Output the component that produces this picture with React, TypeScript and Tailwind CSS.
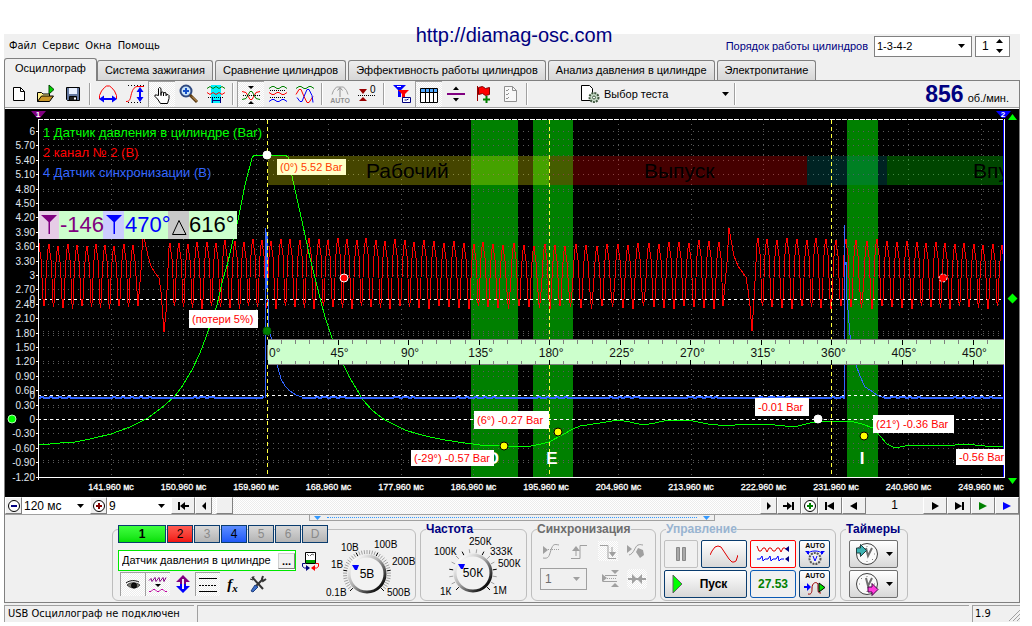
import type { ReactNode } from 'react';
import clsx from 'clsx';

const tabs = [
  'Осциллограф',
  'Система зажигания',
  'Сравнение цилиндров',
  'Эффективность работы цилиндров',
  'Анализ давления в цилиндре',
  'Электропитание',
];

const channels = [
  { id: '1', style: 'w-12 bg-linear-to-b from-[#3dff3d] to-[#00e000] font-bold text-black border-[#0a3c6e]' },
  { id: '2', style: 'w-[26px] bg-linear-to-b from-[#ff5a50] to-[#f01010] text-black border-[#0a3c6e]' },
  { id: '3', style: 'w-[26px] bg-linear-to-b from-[#d8d8d8] to-[#b4b4b4] text-[#8a8a8a] border-[#0a3c6e]' },
  { id: '4', style: 'w-[26px] bg-linear-to-b from-[#5c8cff] to-[#2058f8] text-black border-[#0a3c6e]' },
  { id: '5', style: 'w-[26px] bg-linear-to-b from-[#d8d8d8] to-[#b4b4b4] text-[#8a8a8a] border-[#0a3c6e]' },
  { id: '6', style: 'w-[26px] bg-linear-to-b from-[#d8d8d8] to-[#b4b4b4] text-[#8a8a8a] border-[#0a3c6e]' },
  { id: 'D', style: 'w-[26px] bg-linear-to-b from-[#d8d8d8] to-[#b4b4b4] text-[#8a8a8a] border-[#0a3c6e]' },
];

const hatch = 'bg-[repeating-conic-gradient(#ececec_0_25%,#ffffff_0_50%)] bg-[length:2px_2px]';

// ---------- small pieces ----------

function Icon({ children, size = 20 }: { children: ReactNode; size?: number }) {
  return (
    <svg width={size} height={20} viewBox={`0 0 ${size} 20`} fill="none" stroke="#000" className="block shrink-0" aria-hidden="true">
      {children}
    </svg>
  );
}

function ToolButton({ label, pressed, children }: { label: string; pressed?: boolean; children: ReactNode }) {
  return (
    <button
      type="button"
      aria-label={label}
      aria-pressed={pressed}
      className={clsx(
        'flex h-[26px] w-[27px] shrink-0 items-center justify-center',
        pressed && ['border-l border-t border-[#a0a0a0]', hatch],
      )}
    >
      {children}
    </button>
  );
}

function Separator() {
  return (
    <div className="flex w-2 shrink-0 justify-center py-0.5">
      <div className="w-0.5 border-l border-r border-l-[#a0a0a0] border-r-white" />
    </div>
  );
}

function ScrollButton({ label, wide, children }: { label: string; wide?: boolean; children?: ReactNode }) {
  return (
    <button
      type="button"
      aria-label={label}
      className={clsx(
        'flex h-[17px] shrink-0 items-center justify-center border border-r-[#808080] border-b-[#808080] border-l-white border-t-white bg-[#f0f0f0]',
        wide ? 'w-6' : 'w-[17px]',
      )}
    >
      <svg width="12" height="12" viewBox="0 0 12 12" aria-hidden="true">
        {children}
      </svg>
    </button>
  );
}

function Caret({ color = '#000' }: { color?: string }) {
  return (
    <svg width="7" height="4" viewBox="0 0 7 4" className="pointer-events-none shrink-0" aria-hidden="true">
      <path d="M0 0h7L3.5 4z" fill={color} />
    </svg>
  );
}

function ZoomSign({ color, plus }: { color: string; plus?: boolean }) {
  return (
    <>
      <circle cx="6" cy="6" r="5.5" fill="#fff" stroke="#000" />
      <path d={plus ? 'M3 6h6M6 3v6' : 'M3 6h6'} stroke={color} strokeWidth="2" />
    </>
  );
}

function Group({ title, tone, className, children }: { title: string; tone: string; className: string; children: ReactNode }) {
  return (
    <fieldset className={clsx('h-[78px] rounded-md border border-[#bdbdbd] px-[3px]', className)}>
      <legend className={clsx('ml-0.5 h-3 text-[12px] leading-3 font-bold', tone)}>{title}</legend>
      {children}
    </fieldset>
  );
}

// ---------- chart ----------

const LEFT = 38;
const RIGHT = 1004;
const TOP = 119;
const BOTTOM = 477;

const yTicks = Array.from({ length: 25 }, (_, i) => {
  const v = 6 - i * 0.3;
  const r = Math.round(v * 10) / 10;
  return { y: 131 + i * 14.4, label: Number.isInteger(r) ? String(r + 0) : r.toFixed(2) };
});
const xTicks = Array.from({ length: 13 }, (_, i) => ({
  x: 111 + i * 72.5,
  label: `${(141.96 + i * 9).toFixed(3)} мс`,
}));

const gridRows = [
  ...yTicks.map((t) => t.y),
  155, 191, 227, 263, 335, 371, 407, 443,
  139, 234, 266, 331, 363, 428, 460,
];

const redBefore = [39, 49, 58, 68, 77, 87, 96, 105, 114, 124, 133];
const redMiddle = [
  170, 179, 188, 197, 207, 216, 225, 235, 244, 253, 262, 271, 281, 290, 300, 309, 319, 328, 338, 347, 357, 366, 376, 385, 395,
  405, 414, 424, 434, 444, 454, 464, 474, 483, 493, 503, 514, 524, 534, 545, 555, 565, 576, 586, 597, 607, 618, 628, 638, 649,
  659, 669, 679, 689, 699, 709, 719,
];
const redAfter = [
  758, 767, 777, 787, 797, 807, 816, 826, 836, 846, 856, 867, 877, 887, 897, 907, 917, 926, 936, 945, 955, 964, 974, 983, 993, 1002,
];

function toothWave(peaks: number[]) {
  const parts: string[] = [];
  peaks.forEach((p, i) => {
    const top = 241 - Math.round(3 * Math.cos((p - 330) / 75)) + (i % 3);
    parts.push(`${p - 2},${top + 16} ${p - 1},${top + 5} ${p},${top} ${p + 1},${top + 9} ${p + 2},${top + 16}`);
    const next = peaks[i + 1];
    if (next) {
      const mid = (p + next) / 2;
      parts.push(`${p + 3},278 ${mid - 1},299 ${mid},${306 + (i % 4)} ${mid + 1},299 ${next - 3},278`);
    }
  });
  return parts.join(' ');
}

const redLine = [
  toothWave(redBefore),
  '138,306 141,270 143,230 145,242 148,256 151,266 155,273 159,278 161,292 162,305 164,332 166,312 168,268',
  toothWave(redMiddle),
  '723,306 727,262 729,228 731,240 734,256 738,266 743,273 746,277 748,290 750,306 752,331 754,300 756,262',
  toothWave(redAfter),
].join(' ');

function flatNoise(from: number, to: number) {
  const pts: string[] = [];
  for (let x = from; x <= to; x += 3) {
    pts.push(`${x},${398 + (Math.sin(x * 1.7) * Math.cos(x * 0.31) > 0.4 ? -1 : 0)}`);
  }
  return pts.join(' ');
}

const blueFlat = [flatNoise(39, 266), flatNoise(302, 845), flatNoise(883, 1004)];
const blueSpikes = [
  '265,398 265,228 266,290 267,232 268,300 269,331 272,340 275,357 278,368 281,379 285,386 290,391 296,395 302,397 305,398',
  '844,398 844,225 845,265 846,262 846,290 848,310 850,335 855,362 860,376 865,387 870,390 877,395 884,398',
];

const greenLine =
  '39,444 50,444 60,443 75,442 90,439 111,434 130,427 148,418 165,405 175,396 183,385 192,370 200,353 206,337 211,323 217,305 ' +
  '222,283 228,262 233,240 238,220 245,185 252,158 254,155 285,155 288,157 292,176 300,212 310,258 320,298 325,317 333,341 ' +
  '343,364 350,378 363,400 373,411 385,420 395,425 405,430 418,434 430,437 445,440 465,443 480,445 500,446 531,446 541,444 ' +
  '549,442 562,435 573,429 580,426 600,423 618,420 630,422 643,425 655,423 668,420 685,420 693,421 708,424 727,426 743,424 ' +
  '765,424 785,426 798,426 810,423 820,422 832,421 850,421 862,424 873,428 880,436 887,444 895,448 905,446 920,445 945,446 ' +
  '965,444 985,446 1003,446';

const bands = [
  { x: 471, w: 47, letter: 'D', lx: 493 },
  { x: 533, w: 40, letter: 'E', lx: 552 },
  { x: 847, w: 31, letter: 'I', lx: 862 },
];

const strokes = [
  { x: 268, w: 281, color: '#ffff00', name: 'Рабочий', tx: 366 },
  { x: 549, w: 258, color: '#ff0000', name: 'Выпуск', tx: 644 },
  { x: 807, w: 80, color: '#008080', name: '', tx: 0 },
  { x: 887, w: 117, color: '#00ff00', name: 'Впуск', tx: 973 },
];

const callouts = [
  { x: 277, y: 159, w: 69, h: 16, text: '(0°) 5.52 Bar', fill: '#ffffc8', color: '#ff3c00' },
  { x: 189, y: 310, w: 69, h: 18, text: '(потери 5%)', fill: '#fff', color: '#ff0000' },
  { x: 474, y: 411, w: 75, h: 18, text: '(6°) -0.27 Bar', fill: '#fff', color: '#ff0000' },
  { x: 411, y: 450, w: 83, h: 16, text: '(-29°) -0.57 Bar', fill: '#fff', color: '#ff0000' },
  { x: 755, y: 398, w: 54, h: 18, text: '-0.01 Bar', fill: '#fff', color: '#ff0000' },
  { x: 873, y: 415, w: 81, h: 18, text: '(21°) -0.36 Bar', fill: '#fff', color: '#ff0000' },
  { x: 956, y: 449, w: 50, h: 16, text: '-0.56 Bar', fill: '#fff', color: '#ff0000' },
];

const dots = [
  { x: 267, y: 155, fill: '#fff', stroke: '#fff' },
  { x: 267, y: 331, fill: '#008000', stroke: '#006000' },
  { x: 344, y: 278, fill: '#ff0000', stroke: '#fff' },
  { x: 943, y: 278, fill: '#ff0000', stroke: '#fff', dash: '2 2' },
  { x: 504, y: 446, fill: '#ffff00', stroke: '#000' },
  { x: 558, y: 432, fill: '#ffff00', stroke: '#000' },
  { x: 864, y: 436, fill: '#ffff00', stroke: '#000' },
  { x: 818, y: 419, fill: '#fff', stroke: '#fff' },
  { x: 12, y: 419, fill: '#00ff00', stroke: '#b0ffb0' },
];

function AngleRuler() {
  const step = 70.55 / 5;
  return (
    <g>
      <rect x="267" y="340" width="737" height="25" fill="#ccffcc" />
      <path d="M267 339.5H1004M267 364.5H1004M267.5 339v26" stroke="#808080" />
      {Array.from({ length: 52 }, (_, i) => {
        const x = Math.round(267 + i * step) + 0.5;
        const major = i % 5 === 0;
        return <path key={i} d={major ? `M${x} 340v5M${x} 360v5` : `M${x} 340v4M${x} 361v3`} stroke={major ? '#000' : '#808080'} />;
      })}
      {Array.from({ length: 11 }, (_, i) => (
        <text key={i} x={i === 0 ? 269 : 269 + i * 70.55} y="357" fontSize="12" fill="#111" textAnchor={i === 0 ? 'start' : 'middle'}>
          {i * 45}°
        </text>
      ))}
    </g>
  );
}

function AngleReadout() {
  return (
    <g fontSize="22">
      <rect x="39" y="211" width="198" height="28" fill="#ccffcc" />
      <rect x="39" y="211" width="20" height="28" fill="#e6cce6" />
      <rect x="103" y="211" width="21" height="28" fill="#ccccff" />
      <rect x="168" y="211" width="21" height="28" fill="#c8c8c8" />
      <path d="M41 215h16l-7 7v12h-1.500v-12z" fill="#800080" />
      <path d="M106 215h16l-7 7v12h-1.500v-12z" fill="#0000ff" />
      <path d="M172.500 234.500h13.500l-7-14z" fill="none" stroke="#000" />
      <text x="60" y="232" fill="#800080">-146</text>
      <text x="125" y="232" fill="#0000ff">470°</text>
      <text x="189" y="232" fill="#000">616°</text>
    </g>
  );
}

function Chart() {
  return (
    <svg viewBox="5 109 1014 388" className="block h-auto w-full bg-black font-['Liberation_Sans']" role="img" aria-label="Осциллограмма">
      <defs>
        <clipPath id="plot">
          <rect x={LEFT} y={TOP} width={RIGHT - LEFT} height={BOTTOM - TOP} />
        </clipPath>
      </defs>

      {bands.map((b) => (
        <rect key={b.letter} x={b.x} y={TOP + 1} width={b.w} height={BOTTOM - TOP - 1} fill="#008000" />
      ))}

      <g stroke="#5a5a5a" strokeDasharray="1 4">
        {gridRows.map((y, i) => (
          <path key={i} d={`M${LEFT} ${Math.round(y) + 0.5}H${RIGHT}`} />
        ))}
        {xTicks.map((t) => (
          <path key={t.x} d={`M${Math.floor(t.x) + 0.5} 124V${BOTTOM}`} />
        ))}
      </g>

      <g stroke="#fff" strokeDasharray="3 3">
        <path d="M38 299.500H1004M38 395.500H1004M38 419.500H1004" />
      </g>

      <g clipPath="url(#plot)" fill="none">
        <g shapeRendering="crispEdges">
          <polyline points={redLine} stroke="#ff0000" />
          <polyline points={greenLine} stroke="#00ff00" />
          {blueFlat.map((points) => (
            <polyline key={points} points={points} stroke="#3366ff" strokeWidth="2" />
          ))}
          {blueSpikes.map((points) => (
            <polyline key={points} points={points} stroke="#3366ff" />
          ))}
        </g>
        <g fontSize="21" fill="#000">
          {strokes.map((s) => (
            <g key={s.x}>
              <rect x={s.x} y="156" width={s.w} height="29" fill={s.color} fillOpacity="0.27" />
              <text x={s.tx} y="178">{s.name}</text>
            </g>
          ))}
        </g>
      </g>

      <path d="M267.500 120V477M549.500 120V477M831.500 120V477" stroke="#ffff40" strokeDasharray="4 3" />

      {/* axes */}
      <path d="M38.500 120V480M38 477.500H1004M1004.500 119V478" stroke="#fff" />
      <path d="M38 119.500H1004" stroke="#fff" strokeDasharray="5 1" />
      <path d="M1003.500 120V477" stroke="#0000ff" />
      {yTicks.map((t) => (
        <path key={t.y} d={`M36 ${Math.round(t.y) + 0.5}h3`} stroke="#fff" />
      ))}
      <g fontSize="10" fill="#e0e8f0" textAnchor="end">
        {yTicks.map((t) => (
          <text key={t.y} x="35" y={Math.round(t.y) + 4}>{t.label}</text>
        ))}
        <text x="35" y="303">0</text>
        <text x="35" y="399">0</text>
      </g>
      <g fontSize="9" fill="#fff" stroke="#fff" strokeWidth="0.3" textAnchor="middle">
        {xTicks.map((t) => (
          <text key={t.x} x={t.x} y="490">{t.label}</text>
        ))}
      </g>

      <g fontSize="13">
        <text x="43" y="137" fill="#00ff00">1 Датчик давления в цилиндре (Bar)</text>
        <text x="43" y="157" fill="#ff0000">2 канал № 2 (В)</text>
        <text x="43" y="177" fill="#3366ff">4 Датчик синхронизации (В)</text>
      </g>

      <AngleReadout />
      <AngleRuler />

      <g fontSize="17" fontWeight="bold" fill="#fff" textAnchor="middle">
        {bands.map((b) => (
          <text key={b.letter} x={b.lx} y="464">{b.letter}</text>
        ))}
      </g>
      <g fontSize="11" clipPath="url(#plot)">
        {callouts.map((c) => (
          <g key={c.text}>
            <rect x={c.x} y={c.y} width={c.w} height={c.h} fill={c.fill} />
            <text x={c.x + 3} y={c.y + c.h / 2 + 4} fill={c.color}>{c.text}</text>
          </g>
        ))}
      </g>
      {dots.map((d) => (
        <circle key={`${d.x}-${d.y}`} cx={d.x} cy={d.y} r="4" fill={d.fill} stroke={d.stroke} strokeDasharray={d.dash} />
      ))}

      {/* cursor and trigger markers */}
      <path d="M31 111h15l-6 7h-3z" fill="#800080" />
      <path d="M996 111h15l-6 7h-3z" fill="#0000ff" />
      <g fontSize="8" fontWeight="bold" fill="#fff" textAnchor="middle">
        <text x="38" y="117">1</text>
        <text x="1003" y="117">2</text>
      </g>
      <path d="M1008 120h9l-4.500-6zM1007.500 298.500l5-5 5 5-5 5zM1008 478h9l-4.500 6z" fill="#00ff00" />
    </svg>
  );
}

// ---------- dials ----------

type DialLabel = { text: string; x: number; y: number };

function Dial({ value, labels, ticks }: { value: string; labels: DialLabel[]; ticks: number }) {
  const marks = Array.from({ length: ticks }, (_, i) => {
    const a = ((135 + (270 / (ticks - 1)) * i) * Math.PI) / 180;
    return { a, major: i % ((ticks - 1) / 5) < 1 };
  });
  const cx = 49;
  const cy = 38;
  return (
    <svg width="99" height="64" viewBox="0 0 99 64" className="block font-['Liberation_Sans']" role="img" aria-label={value}>
      <defs>
        <linearGradient id={`rim-${ticks}`} x1="0" y1="0" x2="1" y2="1">
          <stop offset="0.1" stopColor="#fff" />
          <stop offset="0.45" stopColor="#b0b0b0" />
          <stop offset="0.9" stopColor="#000" />
        </linearGradient>
      </defs>
      {marks.map(({ a, major }) => (
        <path
          key={a}
          d={`M${cx + 20 * Math.cos(a)} ${cy + 20 * Math.sin(a)}L${cx + 24 * Math.cos(a)} ${cy + 24 * Math.sin(a)}`}
          stroke={major ? '#000' : '#a0a0a0'}
        />
      ))}
      <circle cx={cx} cy={cy} r="18" fill="#f2f2f2" stroke={`url(#rim-${ticks})`} strokeWidth="3" />
      <path d={`M${cx - 15} ${cy - 9}h7l-2 5h-2z`} fill="#0000ff" />
      <text x={cx} y={cy + 4} fontSize="12" textAnchor="middle">{value}</text>
      <g fontSize="10">
        {labels.map((l) => (
          <text key={l.text} x={l.x} y={l.y}>{l.text}</text>
        ))}
      </g>
    </svg>
  );
}

const voltLabels = [
  { text: '0.1В', x: 8, y: 60 },
  { text: '1В', x: 13, y: 32 },
  { text: '10В', x: 23, y: 15 },
  { text: '100В', x: 56, y: 12 },
  { text: '200В', x: 74, y: 29 },
  { text: '500В', x: 69, y: 60 },
];
const freqLabels = [
  { text: '1К', x: 16, y: 60 },
  { text: '100К', x: 10, y: 20 },
  { text: '250К', x: 45, y: 10 },
  { text: '333К', x: 66, y: 20 },
  { text: '500К', x: 74, y: 32 },
  { text: '1М', x: 69, y: 59 },
];

// ---------- sections ----------

function MenuBar() {
  return (
    <div className="flex h-6 items-center justify-between pl-[5px] pr-2.5">
      <nav className="flex gap-1.5 font-['DejaVu_Sans_Condensed','DejaVu_Sans',sans-serif] text-[11px]">
        <a href="#file">Файл</a>
        <a href="#service">Сервис</a>
        <a href="#windows">Окна</a>
        <a href="#help">Помощь</a>
      </nav>
      <div className="flex items-center">
        <label htmlFor="order" className="mr-1.5 text-[11px] text-[#000080]">Порядок работы цилиндров</label>
        <div className="mr-[3px] flex h-[21px] w-[98px] items-center border border-[#808080] bg-white pr-1.5">
          <select id="order" className="h-full min-w-0 flex-1 appearance-none pl-0.5 text-[11px] outline-none">
            <option>1-3-4-2</option>
          </select>
          <Caret />
        </div>
        <div className="flex h-[21px] w-[35px] items-center border border-[#808080] bg-white pr-1.5">
          <input aria-label="Номер цилиндра" defaultValue="1" className="w-0 flex-1 pl-1.5 text-[12px] outline-none" />
          <svg width="7" height="14" viewBox="0 0 7 14" aria-hidden="true">
            <path d="M0 4h7L3.500 0zM0 10h7l-3.500 4z" />
          </svg>
        </div>
      </div>
    </div>
  );
}

function Tabs() {
  return (
    <div role="tablist" className="flex h-[22px] items-end gap-0.5 text-[11px]">
      {tabs.map((tab, i) => (
        <button
          key={tab}
          type="button"
          role="tab"
          aria-selected={i === 0}
          className={clsx(
            'rounded-t-[3px] border border-b-0 border-[#808080] whitespace-nowrap',
            i === 0
              ? 'relative -mr-0.5 -mb-px h-[23px] bg-[#f0f0f0] px-2.5 pb-1'
              : 'h-5 bg-linear-to-b from-[#eeeeee] to-[#d6d6d6] px-[7px]',
          )}
        >
          {tab}
        </button>
      ))}
    </div>
  );
}

function Toolbar() {
  return (
    <div className="flex h-[27px] border-b border-[#a0a0a0]">
      <ToolButton label="Новый">
        <Icon><path d="M4.500 3.500h7l4 4v9h-11z" fill="#fff" /><path d="M11.500 3.500v4h4" /></Icon>
      </ToolButton>
      <ToolButton label="Открыть">
        <Icon>
          <path d="M1.500 17.500v-9h4l1.500 1.500h6.500v2" fill="#ffef8c" />
          <path d="M1.500 17.500l4-5.500h12l-4 5.500z" fill="#c89628" />
          <path d="M13 1l5 4.500-5 4.500z" fill="#00d000" stroke="#004000" />
        </Icon>
      </ToolButton>
      <ToolButton label="Сохранить">
        <Icon>
          <path d="M3.500 3.500h13v13h-12l-1-1z" fill="#6478a0" />
          <path d="M6 4h8v6H6z" fill="#e8f0ff" stroke="none" />
          <path d="M6.500 12.500h7v4h-7z" fill="#222" /><path d="M12 13.500v2" stroke="#fff" strokeWidth="2" />
        </Icon>
      </ToolButton>
      <Separator />
      <ToolButton label="Длительность">
        <Icon>
          <path d="M1.500 15v-3.500l2-4.500 3-3.500 2-1.500h3l2 1.500 3 3.500 2 4.500V15" stroke="#f00" />
          <path d="M4 15h12" stroke="#00f" strokeWidth="2" /><path d="M1 15l5-3.500v7zM19 15l-5-3.500v7z" fill="#00f" stroke="none" />
        </Icon>
      </ToolButton>
      <ToolButton label="Амплитуда">
        <Icon>
          <path d="M3 1.500h16M3 18.500h13" strokeDasharray="1 2" />
          <path d="M1 17.500c3 0 4-1 5-6S9 3 12 2.500h7" stroke="#f00" />
          <path d="M15 6v9" stroke="#00f" strokeWidth="2" /><path d="M15 3l3.500 5h-7zM15 18l3.500-5h-7z" fill="#00f" stroke="none" />
        </Icon>
      </ToolButton>
      <ToolButton label="Перемещение" pressed>
        <Icon>
          <path
            d="M6.500 10.500v-7l1-1 1.500 1v6-2l1.500-.5 1 .5v2-1.500l1.500-.5 1 .5v2l2-.5 1 1v3l-1.500 5h-7l-3-4.500-2.500-2.500v-1.500h1.500z"
            fill="#fff"
          />
          <path d="M9 9v2M11.500 9v2M14 10v1" />
        </Icon>
      </ToolButton>
      <ToolButton label="Масштаб">
        <Icon>
          <circle cx="7" cy="7" r="5.500" fill="#c8e4fa" stroke="#304a80" strokeWidth="2" />
          <path d="M4 7h6M7 4v6" stroke="#1450c8" strokeWidth="2" />
          <path d="M11 11l7 7" stroke="#5a3c14" strokeWidth="3" /><path d="M13 12.500l5 5" stroke="#e0a860" />
        </Icon>
      </ToolButton>
      <ToolButton label="Измерение участка">
        <Icon>
          <path d="M5 1h10v18H5z" fill="#00f0ff" stroke="none" />
          <path d="M1 4.500l3-2 3 2 3-2 3 2 3-2 3 2" stroke="#008000" />
          <path d="M1 8.500l3 2 3-2 3 2 3-2 3 2 3-2" stroke="#f00" />
          <path d="M2 13.500h16" strokeDasharray="1 1" />
          <path d="M6.500 14v5M14.500 14v5M7 16.500h7" stroke="#000080" />
        </Icon>
      </ToolButton>
      <Separator />
      <ToolButton label="Наложение" pressed>
        <Icon>
          <path d="M1 6.500l4 1 4 7h2l4-7 4-1" stroke="#f00" /><path d="M1 14.500l4-1 4-7 2 0 4 7 4 1" stroke="#008000" />
          <path d="M2 10.500h17" strokeDasharray="1 1" /><path d="M7 1h6l-3 3zM7 19h6l-3-3z" fill="#000" stroke="none" />
        </Icon>
      </ToolButton>
      <ToolButton label="Раздельно">
        <Icon>
          <path d="M1 4.500l3-2h2l3 2h2l3-2h2l3 2" stroke="#008000" />
          <path d="M1 8.500l3 2h2l3-2h2l3 2h2l3-2" stroke="#f00" />
          <path d="M1 17.500l3-2h2l3 2h2l3-2h2l3 2" stroke="#00f" />
          <path d="M2 6.500h16M2 13.500h16" strokeDasharray="1 1" />
        </Icon>
      </ToolButton>
      <ToolButton label="Совмещение">
        <Icon>
          <path d="M1 4.500l3-2h2l3 2h2l3-2h2l3 2" stroke="#008000" />
          <path d="M1 10.500l3-5h2l3 7 3 6h2l4-6" stroke="#f00" />
          <path d="M2 13.500l3 4h2l2-5 3-7h2l3 6 1 7" stroke="#00f" />
        </Icon>
      </ToolButton>
      <Separator />
      <ToolButton label="Авто масштаб">
        <Icon>
          <path d="M2 10.500l1.500-4 3-3.500h7l3 3.500 1.500 4" stroke="#a0a0a0" /><path d="M10 4v9M7.500 6.500L10 3.500l2.500 3" stroke="#909090" />
          <text x="10" y="19" fontSize="7" fontWeight="bold" textAnchor="middle" fill="#909090" stroke="none">AUTO</text>
        </Icon>
      </ToolButton>
      <ToolButton label="Ноль">
        <Icon>
          <path d="M2 5h8l-4 5zM2 17h8l-4-4z" fill="#900" stroke="none" /><path d="M1 11.500h18" strokeDasharray="1 1" />
          <text x="13" y="9" fontSize="10" fill="#000" stroke="none">0</text>
        </Icon>
      </ToolButton>
      <Separator />
      <ToolButton label="Фильтр">
        <Icon>
          <path d="M1 1h13l-5 5v7H6V6z" fill="#00f" stroke="none" /><path d="M6 6h11l-4 4v5h-3v-5z" fill="#f00" stroke="none" />
          <path d="M5 2.500h4" stroke="#fff" /><path d="M10.500 13.500h8v5h-8z" fill="#fff" stroke="#000080" /><path d="M12.500 16h2l2-1" stroke="#000080" />
        </Icon>
      </ToolButton>
      <ToolButton label="Таблица" pressed>
        <Icon>
          <path d="M1.500 3.500h17v14h-17z" fill="#fff" /><path d="M2 4h16v3H2z" fill="#50a8ff" stroke="none" />
          <path d="M1 7.500h18M6.500 4v13M10.500 4v13M14.500 4v13" />
        </Icon>
      </ToolButton>
      <ToolButton label="Разделитель">
        <Icon><path d="M1 10h18" stroke="#800080" strokeWidth="2" /><path d="M7 6h6l-3-3.500zM7 14h6l-3 3.500z" fill="#000" stroke="none" /></Icon>
      </ToolButton>
      <ToolButton label="Маркер">
        <Icon>
          <path d="M4.500 2v15" stroke="#900" strokeWidth="1" /><path d="M5.500 3.500l4-1 3 2 4-1v7l-4 1-3-2-4 1z" fill="#f00" stroke="#800000" />
          <path d="M10 15.500h7M13.500 12v7" stroke="#008000" strokeWidth="2" />
        </Icon>
      </ToolButton>
      <ToolButton label="Отчёт">
        <Icon>
          <path d="M4.500 2.500h8l4 4v11h-12z" stroke="#909090" fill="#f8f8f8" /><path d="M12.500 2.500v4h4" stroke="#909090" />
          <path d="M6 6l1 1 2-2M6 10l1 1 2-2M6 14l1 1 2-2" stroke="#909090" />
        </Icon>
      </ToolButton>
      <Separator />
      <button type="button" className="ml-[49px] flex w-[151px] shrink-0 items-center pr-0.5 text-[11px]">
        <Icon>
          <path d="M1.500 1.500h8l3 3v12h-11z" fill="#fff" />
          <circle cx="14" cy="13.500" r="4.500" fill="#c8dcc8" stroke="#405840" strokeWidth="2" strokeDasharray="2 1" />
          <circle cx="14" cy="13.500" r="1.500" fill="#fff" stroke="#405840" />
        </Icon>
        <span className="ml-1 flex-1 text-left">Выбор теста</span>
        <Caret />
      </button>
      <Separator />
      <div className="flex flex-1 items-baseline justify-end gap-1 pr-2.5 leading-[26px]">
        <span className="text-[23px] font-bold text-[#000080]">856</span>
        <span className="text-[11px]">об./мин.</span>
      </div>
    </div>
  );
}

function ScrollRow() {
  return (
    <div className="flex h-[17px] text-[12px]">
      <ScrollButton label="Уменьшить время"><ZoomSign color="#000080" /></ScrollButton>
      <div className="flex w-[68px] items-center bg-white pr-1.5">
        <select aria-label="Развёртка" className="h-full min-w-0 flex-1 appearance-none pl-0.5 text-[12px] leading-4 outline-none">
          <option>120 мс</option>
        </select>
        <Caret />
      </div>
      <ScrollButton label="Увеличить время"><ZoomSign color="#800000" plus /></ScrollButton>
      <div className="flex w-16 items-center bg-white pr-1.5">
        <select aria-label="Кадр" className="h-full min-w-0 flex-1 appearance-none pl-0.5 text-[12px] leading-4 outline-none">
          <option>9</option>
        </select>
        <Caret />
      </div>
      <ScrollButton label="В начало" wide><path d="M1 2h2v8H1zM3 6l5-4v3h4v2H8v3z" /></ScrollButton>
      <ScrollButton label="Влево"><path d="M4 6l4-4v8z" /></ScrollButton>
      <div className={clsx('flex flex-1 pl-1', hatch)}>
        <ScrollButton label="Позиция" />
      </div>
      <ScrollButton label="Вправо"><path d="M8 6L4 2v8z" /></ScrollButton>
      <ScrollButton label="В конец" wide><path d="M9 2h2v8H9zM9 6L4 2v3H0v2h4v3z" /></ScrollButton>
      <ScrollButton label="Добавить"><ZoomSign color="#008000" plus /></ScrollButton>
      <ScrollButton label="Первый кадр" wide><path d="M1 2h2v8H1zM3 6l7-4v8z" /></ScrollButton>
      <ScrollButton label="Предыдущий кадр" wide><path d="M2 6l7-4v8z" /></ScrollButton>
      <span className="w-[57px] text-center leading-[17px]">1</span>
      <ScrollButton label="Следующий кадр" wide><path d="M10 6L3 2v8z" /></ScrollButton>
      <ScrollButton label="Последний кадр" wide><path d="M9 2h2v8H9zM9 6L2 2v8z" /></ScrollButton>
      <ScrollButton label="Воспроизвести" wide><path d="M2 2v8l8-4z" fill="#008000" /></ScrollButton>
      <ScrollButton label="Воспроизвести всё" wide><path d="M2 2v8l8-4z" fill="#0000ff" /></ScrollButton>
    </div>
  );
}

function Splitter() {
  return (
    <div className="flex h-[7px] justify-center border-t border-[#a0a0a0]">
      <div className="flex h-1.5 w-2/5 items-center gap-1.5 border border-t-0 border-[#a0a0a0] px-1">
        <Caret color="#3399ff" />
        <div className="flex-1 border-t border-dotted border-[#3399ff]" />
        <Caret color="#3399ff" />
      </div>
    </div>
  );
}

function SmallTool({ label, pressed, children }: { label: string; pressed?: boolean; children: ReactNode }) {
  return (
    <button
      type="button"
      aria-label={label}
      aria-pressed={pressed}
      className={clsx('flex h-6 w-[25px] items-center justify-center', pressed && ['border-l border-t border-[#a0a0a0]', hatch])}
    >
      {children}
    </button>
  );
}

function ChannelGroup() {
  return (
    <div className="mt-1.5 flex h-[72px] w-[304px] rounded-md border border-[#bdbdbd] pl-[5px]">
      <div className="-mt-[5px] w-[210px] shrink-0">
        <div className="flex gap-px">
          {channels.map((c) => (
            <button key={c.id} type="button" className={clsx('h-[18px] border text-[12px] leading-3', c.style)}>
              {c.id}
            </button>
          ))}
        </div>
        <div className="mt-[7px] flex items-center gap-1">
          <div className="flex h-[21px] w-[178px] items-center border border-[#00e800] bg-white pl-[3px]">
            <input
              aria-label="Название канала"
              defaultValue="Датчик давления в цилиндре"
              className="w-0 flex-1 text-[11px] outline-none"
            />
            <button type="button" aria-label="Выбрать датчик" className="h-4 w-[17px] border border-[#d0d0d0] border-r-[#808080] border-b-[#808080] bg-[#f0f0f0] text-[11px] leading-[8px] font-bold">
              ...
            </button>
          </div>
          <button type="button" aria-label="Поменять каналы">
            <Icon>
              <path d="M5.500 1.500h10v11h-10z" fill="#fff" /><path d="M6 10.500h9" stroke="#00a000" strokeWidth="3" />
              <path d="M7 3l2 2M10 5l2-2 2 1" stroke="#666" />
              <path d="M5 12.500H2.500v3l2 1.500H7" stroke="#000080" /><path d="M6 14l4 3-4 3z" fill="#000080" stroke="none" />
              <path d="M16 12.500h2.500v3l-2 1.500H14" stroke="#f00" /><path d="M15 14l-4 3 4 3z" fill="#f00" stroke="none" />
            </Icon>
          </button>
        </div>
        <div className="mt-px flex pl-0.5">
          <SmallTool label="Показать" pressed>
            <Icon>
              <path d="M4 10c3-3 9-3 13 0-3 4-9 4-13 0z" fill="#787870" stroke="#444" /><circle cx="11" cy="10.500" r="2.500" fill="#111" />
              <path d="M3 8c4-3 9-3 13-1" />
            </Icon>
          </SmallTool>
          <SmallTool label="Фильтр" pressed>
            <Icon>
              <path d="M1 5.500l2-2 1 3 3-4 1 4 3-4 1 4 3-4 1 4 2-4" stroke="#800080" /><path d="M7 9h6l-3 3z" fill="#000" stroke="none" />
              <path d="M1 16.500h2l2-2h2l2 2h2l2-2h2l2 2h2" stroke="#c000a0" />
            </Icon>
          </SmallTool>
          <SmallTool label="Инверсия">
            <Icon>
              <path d="M10 1l7 7h-4v2H7V8H3z" fill="#800080" stroke="none" /><path d="M10 19l7-7h-4v-2H7v2H3z" fill="#00f" stroke="none" />
              <path d="M10 5v10" stroke="#f0f0f0" strokeWidth="2" />
            </Icon>
          </SmallTool>
          <SmallTool label="Уровни" pressed>
            <Icon><path d="M1 3.500h18M1 16.500h18" /><path d="M1 10.500h18" strokeDasharray="2 1" /></Icon>
          </SmallTool>
          <SmallTool label="Функция">
            <span className="font-['Liberation_Serif'] text-[15px] font-bold italic">f<sub className="text-[11px]">x</sub></span>
          </SmallTool>
          <SmallTool label="Настройки">
            <Icon>
              <path d="M4 3l11 12" stroke="#333" strokeWidth="2" /><path d="M15 2l-1 3 1 2 3-2M14 6L8 12" stroke="#333" strokeWidth="2" />
              <path d="M3 17l4-6 3 2-5 5z" fill="#3c6ec8" stroke="#204080" /><path d="M2 5l3 1 1-4" stroke="#333" />
            </Icon>
          </SmallTool>
        </div>
      </div>
      <div className="-ml-2.5 shrink-0 pt-1.5">
        <Dial value="5В" labels={voltLabels} ticks={41} />
      </div>
    </div>
  );
}

function SyncGroup() {
  return (
    <Group title="Синхронизация" tone="text-[#6d6d6d]" className="w-[125px]">
      <div className="grid grid-cols-4 gap-x-2 px-1.5 pt-1.5">
        <button type="button" disabled aria-label="Уровень" className="size-5">
          <Icon>
            <path d="M2 5v8l5-4z" fill="#a0a0a0" stroke="none" /><path d="M5 8.500h13" stroke="#a0a0a0" strokeDasharray="1 1" />
            <path d="M2 17c6 1 6-2 8-8s3-6 8-5" stroke="#a0a0a0" />
          </Icon>
        </button>
        <button type="button" disabled aria-label="Фронт" className="size-5">
          <Icon><path d="M2 17.500h9v-13h7M7 15V7" stroke="#a0a0a0" /><path d="M3 10h8L7 5z" fill="#a0a0a0" stroke="none" /></Icon>
        </button>
        <button type="button" disabled aria-label="Спад" className={clsx('size-5', hatch)}>
          <Icon><path d="M2 4.500h8v13h8M14 6v7" stroke="#a0a0a0" /><path d="M11 11h7l-3.500 5z" fill="#a0a0a0" stroke="none" /></Icon>
        </button>
        <button type="button" disabled aria-label="Вручную" className="size-5">
          <Icon>
            <path d="M1 4v8l5-4z" fill="#a0a0a0" stroke="none" /><path d="M3 14c5-1 6-9 9-10s3 0 5 0" stroke="#a0a0a0" />
            <path d="M12 7l-2 4 4 6 4-3-1-5z" fill="#a0a0a0" stroke="none" />
          </Icon>
        </button>
      </div>
      <div className="mt-[7px] flex items-center pl-[5px]">
        <div className="mr-3.5 flex h-[22px] w-[47px] items-center border border-[#a0a0a0] pr-1.5">
          <select disabled aria-label="Канал синхронизации" className="h-full min-w-0 flex-1 appearance-none pl-1 text-[12px] text-[#6d6d6d] opacity-100 outline-none">
            <option>1</option>
          </select>
          <Caret color="#a0a0a0" />
        </div>
        <Icon>
          <path d="M1 5v8l5-4zM10 1h8l-4 4zM10 18h8l-4-4z" fill="#a0a0a0" stroke="none" />
          <path d="M4 6.500h12M2 12.500h14" stroke="#a0a0a0" /><path d="M6 9.500h10" stroke="#a0a0a0" strokeDasharray="1 1" />
        </Icon>
        <span className={clsx('ml-1.5 rounded-sm', hatch)}>
          <Icon><path d="M1 10h18" stroke="#a0a0a0" strokeWidth="2" /><path d="M5 5v10l5-5zM15 5v10l-5-5z" fill="#a0a0a0" stroke="none" /></Icon>
        </span>
      </div>
    </Group>
  );
}

const glossy = 'flex h-7 items-center justify-center rounded-[2px] border border-[#0a3c6e] bg-linear-to-b from-white to-[#d8d8d8]';

function ControlGroup() {
  return (
    <Group title="Управление" tone="text-[#99b4d1]" className="w-44">
      <div className="flex flex-col gap-0.5 pt-[5px]">
        <div className="flex gap-[3px]">
          <button type="button" aria-label="Пауза" disabled className="flex h-7 w-[34px] items-center justify-center rounded-[2px] border border-[#c0c0c0]">
            <Icon><path d="M5.500 3.500h3v13h-3zM11.500 3.500h3v13h-3z" fill="#a8a8a8" stroke="#888" /></Icon>
          </button>
          <button type="button" aria-label="Один кадр" className={clsx(glossy, 'w-[46px]')}>
            <Icon size={28}><path d="M0 11l2-4 3-4 3-1 3 1 4 6 4 6 3 3h2l2-1 2-6" stroke="#e00000" /></Icon>
          </button>
          <button type="button" aria-label="Непрерывно" className="flex h-7 w-[46px] items-center justify-center rounded-[2px] border border-[#ff0000] bg-[#fafafa]">
            <Icon size={34}>
              <path d="M1 2l2 5 2 0 2-3 2 0 2 4 2-4 2 0 2 3 2 0 2-3 2 0 2 4 2-4 2 0 2 2" stroke="#e00000" />
              <path d="M1 15h3l2-3 1 5 2-2h3l2-3 1 5 2-2h3l2-3 1 5 2-2h3" stroke="#0000ff" />
              <path d="M29 5l4-3v6zM29 15l4-3v6z" fill="#000080" stroke="none" />
            </Icon>
          </button>
          <button type="button" aria-label="Авто напряжение" className={clsx(glossy, 'w-[31px]')}>
            <svg width="22" height="24" viewBox="0 0 22 24" fill="none" aria-hidden="true">
              <text x="11" y="6" fontSize="7" fontWeight="bold" textAnchor="middle" fill="#000">AUTO</text>
              <path d="M3 12c3-4 13-4 16 0" stroke="#00f" /><path d="M1 9h4v4zM21 9h-4v4z" fill="#00f" />
              <circle cx="11" cy="16.500" r="5.500" stroke="#555" fill="#eee" strokeWidth="2" strokeDasharray="2 1" /><path d="M9 14l2 5 2-5" stroke="#00f" />
            </svg>
          </button>
        </div>
        <div className="flex gap-[3px]">
          <button type="button" className={clsx(glossy, 'w-[83px] gap-4 pr-3 text-[12px] font-bold')}>
            <svg width="12" height="20" viewBox="0 0 12 20" aria-hidden="true">
              <path d="M1 1v18l9-9z" fill="#00ff00" stroke="#606060" />
            </svg>
            Пуск
          </button>
          <output className="flex h-7 w-[46px] items-center justify-center rounded-[3px] border border-[#0a5ab4] text-[12px] font-bold text-[#008000]">27.53</output>
          <button type="button" aria-label="Авто запуск" className={clsx(glossy, 'w-[31px]')}>
            <svg width="22" height="24" viewBox="0 0 22 24" fill="none" aria-hidden="true">
              <text x="11" y="6" fontSize="7" fontWeight="bold" textAnchor="middle" fill="#000">AUTO</text>
              <path d="M0 15h4" stroke="#00f" strokeWidth="2" /><path d="M3 11l4 4-4 4z" fill="#00f" />
              <path d="M4 22c4 1 4-3 4-6 0-5 4-7 6-4v4c0 4 0 5 3 5" stroke="#900" /><path d="M15 11v9l6-4.500z" fill="#00e000" stroke="#000" />
            </svg>
          </button>
        </div>
      </div>
    </Group>
  );
}

function TimerButton({ label, start }: { label: string; start?: boolean }) {
  return (
    <button type="button" aria-label={label} className="flex h-7 w-[49px] items-center justify-center gap-[7px] rounded-[2px] border border-[#707070] bg-linear-to-b from-white to-[#d8d8d8]">
      <svg width="24" height="24" viewBox="0 0 24 24" fill="none" aria-hidden="true">
        <circle cx="12" cy="12" r="10.500" fill="#fafafa" stroke="#404040" />
        <path d="M12 4v1M12 19v1M4 12h1M19 12h1M6 6l1 1M17 17l1 1" stroke="#808080" />
        <path d="M11 6l2 8 4-8" stroke="#707070" strokeWidth="2" />
        {start ? (
          <path d="M1.500 6h4V2.500l6 6-6 6V11h-4z" fill="#3cb4b4" stroke="#204040" />
        ) : (
          <path d="M13 15h4v-3.500l6 6-6 6V20h-4z" fill="#ff3cdc" stroke="#400040" />
        )}
      </svg>
      <Caret />
    </button>
  );
}

function ControlPanel() {
  return (
    <div className="flex h-[81px] gap-1 pl-[107px] pt-0.5">
      <ChannelGroup />
      <Group title="Частота" tone="text-[#000080]" className="w-[106px]">
        <Dial value="50К" labels={freqLabels} ticks={16} />
      </Group>
      <SyncGroup />
      <ControlGroup />
      <Group title="Таймеры" tone="text-[#000080]" className="w-[68px]">
        <div className="flex flex-col gap-0.5 pt-[5px] pl-[5px]">
          <TimerButton label="Таймер включения" start />
          <TimerButton label="Таймер выключения" />
        </div>
      </Group>
    </div>
  );
}

function StatusBar() {
  return (
    <footer className="mt-0.5 flex h-[17px] gap-[3px] font-['DejaVu_Sans_Condensed','DejaVu_Sans',sans-serif] text-[11px] leading-4">
      <span className="w-[190px] border-l border-t border-[#a0a0a0] pl-[3px]">USB Осциллограф не подключен</span>
      <span className="flex-1 border-l border-t border-[#a0a0a0]" />
      <span className="flex w-12 justify-between border-l border-t border-[#a0a0a0] pl-0.5">
        1.9
        <svg width="12" height="16" viewBox="0 0 12 16" stroke="#a0a0a0" aria-hidden="true">
          <path d="M1 15L12 4M5 15l7-7M9 15l3-3" />
        </svg>
      </span>
    </footer>
  );
}

export default function App() {
  return (
    <div className="relative bg-white pt-[34px] pr-3 pb-[5px] pl-1 font-['Liberation_Sans',Arial,sans-serif] text-black">
      <div className="pointer-events-none absolute inset-x-0 top-[23px] z-10 flex justify-center pr-1">
        <a href="http://diamag-osc.com" className="pointer-events-auto text-[20px] leading-6 text-[#000080]">http://diamag-osc.com</a>
      </div>
      <div className="bg-[#f0f0f0]">
        <MenuBar />
        <Tabs />
        <main className="border border-[#808080]">
          <Toolbar />
          <div className="border-t border-white">
            <Chart />
          </div>
          <ScrollRow />
          <Splitter />
          <ControlPanel />
        </main>
        <StatusBar />
      </div>
    </div>
  );
}
